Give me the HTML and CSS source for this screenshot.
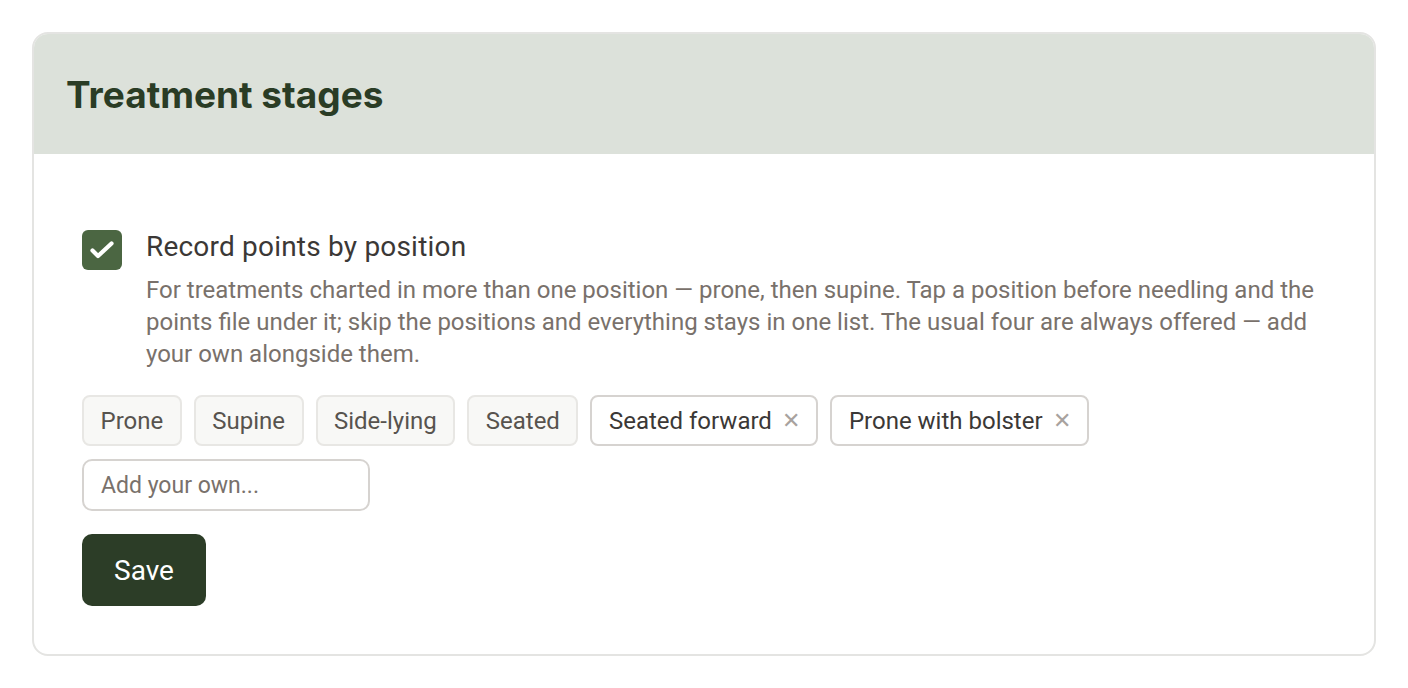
FILE: index.html
```html
<!DOCTYPE html>
<html>
  <head>
    <meta charset="utf-8">
    <title>Treatment stages</title>
    <link rel="stylesheet" href="styles.css">
  </head>
  <body>
    <div class="card">
      <div class="card-head">
        <h2>Treatment stages</h2>
      </div>
      <div class="card-body">
        <div class="option">
          <span class="check">
            <svg width="40" height="40" viewBox="0 0 40 40"><path d="M10.5 20.5L16 26L29.5 13.5" fill="none" stroke="#fff" stroke-width="4.2" stroke-linecap="round" stroke-linejoin="round"/></svg>
          </span>
          <div class="option-text">
            <div class="option-label">Record points by position</div>
            <p class="option-desc">For treatments charted in more than one position — prone, then supine. Tap a position before needling and the points file under it; skip the positions and everything stays in one list. The usual four are always offered — add your own alongside them.</p>
          </div>
        </div>
        <div class="chips">
          <span class="chip">Prone</span>
          <span class="chip">Supine</span>
          <span class="chip">Side-lying</span>
          <span class="chip">Seated</span>
          <span class="chip custom">Seated forward <span class="remove">&#x2715;</span></span>
          <span class="chip custom">Prone with bolster <span class="remove">&#x2715;</span></span>
          <input class="add-own" type="text" placeholder="Add your own...">
        </div>
        <button class="save">Save</button>
      </div>
    </div>
  </body>
</html>
```

FILE: styles.css
```css
* {
  box-sizing: border-box;
}

body {
  margin: 32px 32px;
  background: #fff;
  font-family: Roboto, "Liberation Sans", sans-serif;
  color: #3b3836;
}

.card {
  border: 2px solid #e4e4e2;
  border-radius: 16px;
  overflow: hidden;
}

.card-head {
  background: #dce1da;
  height: 120px;
  padding: 0 32px;
  display: flex;
  align-items: center;
}

.card-head h2 {
  margin: 0;
  font-family: Inter, "Liberation Sans", sans-serif;
  font-size: 37px;
  font-weight: 700;
  color: #2a3c25;
}

.card-body {
  padding: 76px 48px 48px;
}

.option {
  display: flex;
  gap: 24px;
  align-items: flex-start;
}

.check {
  flex: none;
  width: 40px;
  height: 40px;
  border-radius: 6px;
  background: #4b6642;
  display: flex;
  align-items: center;
  justify-content: center;
}

.option-label {
  font-size: 28px;
  letter-spacing: 0.2px;
  line-height: 32px;
  color: #3b3836;
  margin-top: 1px;
}

.option-desc {
  margin: 11px 0 0;
  font-size: 24px;
  line-height: 32px;
  color: #79716b;
}

.chips {
  display: flex;
  flex-wrap: wrap;
  gap: 13px 12px;
  margin-top: 25px;
}

.chip {
  height: 51px;
  padding: 0 16.5px;
  display: inline-flex;
  align-items: center;
  font-size: 24px;
  color: #57534e;
  background: #f8f8f6;
  border: 2px solid #e8e7e4;
  border-radius: 8px;
}

.chip.custom {
  background: #fff;
  border-color: #d6d3d0;
  color: #3b3836;
}

.remove {
  margin-left: 10px;
  color: #a8a29e;
  font-size: 22px;
}

.add-own {
  width: 288px;
  height: 52px;
  padding: 0 17px;
  font-family: Roboto, "Liberation Sans", sans-serif;
  font-size: 23px;
  color: #3b3836;
  border: 2px solid #d6d3d0;
  border-radius: 10px;
  outline: none;
}

.add-own::placeholder {
  color: #79716b;
}

.save {
  margin-top: 23px;
  height: 72px;
  padding: 0 32px;
  background: #2c3d27;
  color: #fff;
  border: none;
  border-radius: 10px;
  font-family: Roboto, "Liberation Sans", sans-serif;
  font-size: 28px;
}
```
